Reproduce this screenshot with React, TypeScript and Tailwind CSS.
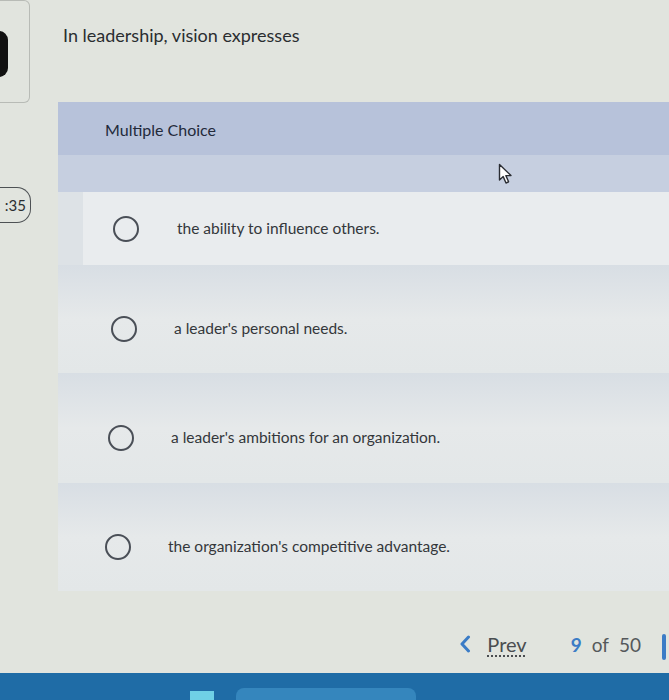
import React from 'react'

const options = [
  { text: 'the ability to influence others.', circle: 'ml-[30px]', gap: 'gap-[38px]', row: 'h-[73px] bg-[#e9ecee] ml-[25px]' },
  { text: "a leader's personal needs.", circle: 'ml-[53px]', gap: 'gap-[37px]', row: 'h-[108px] ml-0' },
  { text: "a leader's ambitions for an organization.", circle: 'ml-[50px]', gap: 'gap-[37px]', row: 'h-[110px] ml-0' },
  { text: "the organization's competitive advantage.", circle: 'ml-[47px]', gap: 'gap-[37px]', row: 'h-[108px] ml-0' },
]

function Cursor() {
  return (
    <svg width="16" height="22" viewBox="0 0 16 22" className="absolute left-[498px] top-[163px]">
      <path d="M1.5 1.5 L1.5 17 L5.2 13.6 L8 20 L10.6 18.8 L7.9 12.6 L13 12.6 Z" fill="#ffffff" stroke="#2a2d33" strokeWidth="1.4" strokeLinejoin="round" />
    </svg>
  )
}

export default function App() {
  return (
    <div className="relative w-[669px] h-[700px] overflow-hidden bg-[#e1e4de] flex flex-col" style={{ fontFamily: 'Lato, "Open Sans", sans-serif' }}>
      <div className="flex flex-1">
        {/* left gutter */}
        <div className="w-[58px] shrink-0 flex flex-col">
          <div className="w-[30px] h-[103px] border border-[#b8bbb6] border-l-0 rounded-r-md flex items-center overflow-hidden">
            <div className="w-[18px] h-[46px] bg-[#111] rounded-full -ml-[10px] mt-[4px] shrink-0" />
          </div>
          <div className="mt-[84px] w-[31px] h-[36px] border-[1.5px] border-[#4d5154] border-l-0 rounded-r-[14px] flex items-center justify-end pr-[4px] text-[15px] text-[#2b2e31]">
            :35
          </div>
        </div>

        {/* main column */}
        <div className="flex-1 flex flex-col">
          <div className="h-[102px] pl-[5px] pt-[22px] text-[18px] text-[#2a2d30]">In leadership, vision expresses</div>

          <div className="flex flex-col bg-[#dde2e6]">
            <div className="h-[53px] bg-[#b7c2da] pl-[47px] pt-[16px] text-[16px] text-[#232a3a]">Multiple Choice</div>
            <div className="h-[37px] bg-[#c6cfe0]" />
            {options.map((o, i) => (
              <div key={i} className={`flex items-center ${o.row} ${i > 0 ? 'bg-gradient-to-b from-[#d8dee4] via-[#e6e9ea] to-[#e3e7e8]' : ''}`}>
                <div className={`flex items-center ${o.gap} ${i > 0 ? 'mt-[20px]' : ''}`}>
                  <span className={`${o.circle} w-[26px] h-[26px] rounded-full border-[2px] border-[#4a4f57] shrink-0`} />
                  <span className="text-[15.5px] text-[#34373b]">{o.text}</span>
                </div>
              </div>
            ))}
          </div>

          {/* nav */}
          <div className="flex-1 flex items-end justify-end pb-[14px] pr-[28px] gap-[44px]">
            <div className="flex items-center gap-[16px]">
              <svg width="12" height="18" viewBox="0 0 12 18">
                <path d="M9.5 2 L3 9 L9.5 16" fill="none" stroke="#3b7cc6" strokeWidth="3" strokeLinecap="round" strokeLinejoin="round" />
              </svg>
              <span className="text-[20px] text-[#4a4d50] underline decoration-dotted underline-offset-[3px]">Prev</span>
            </div>
            <div className="text-[19px] text-[#55585b]">
              <span className="font-bold text-[#3b7cc6]">9</span>
              <span className="ml-[10px]">of</span>
              <span className="ml-[10px]">50</span>
            </div>
          </div>
        </div>
      </div>

      {/* taskbar */}
      <div className="h-[27px] bg-[#1f6ca6] flex items-end pl-[190px] gap-[22px]">
        <div className="w-[24px] h-[9px] bg-[#6fd0e6]" />
        <div className="w-[180px] h-[12px] bg-[#3586bd] rounded-t-[8px]" />
      </div>

      <div className="absolute right-[3px] top-[634px] w-[4px] h-[26px] bg-[#3b7cc6] rounded-sm" />
      <Cursor />
    </div>
  )
}
